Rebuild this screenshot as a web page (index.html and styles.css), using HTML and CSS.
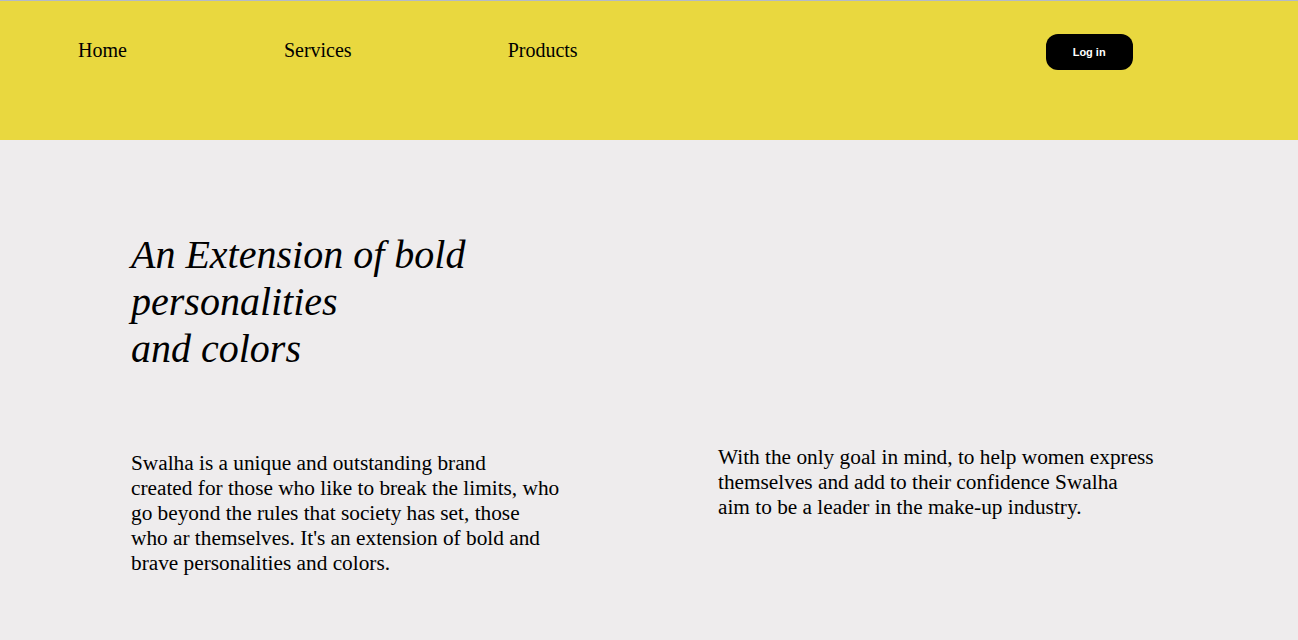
FILE: index.html
```html
<!DOCTYPE html>
<html lang="en">
<head>
<meta charset="utf-8">
<title>Swalha</title>
<link rel="stylesheet" href="styles.css">
</head>
<body>
<header class="topbar">
  <nav class="nav">
    <a class="nav-link" href="#">Home</a>
    <a class="nav-link" href="#">Services</a>
    <a class="nav-link nav-last" href="#">Products</a>
  </nav>
  <button class="login">Log in</button>
</header>
<main class="hero">
  <h1 class="title">An Extension of bold<br>personalities<br>and colors</h1>
  <div class="columns">
    <p class="text text-left">Swalha is a unique and outstanding brand<br>created for those who like to break the limits, who<br>go beyond the rules that society has set, those<br>who ar themselves. It's an extension of bold and<br>brave personalities and colors.</p>
    <p class="text text-right">With the only goal in mind, to help women express<br>themselves and add to their confidence Swalha<br>aim to be a leader in the make-up industry.</p>
  </div>
</main>
</body>
</html>
```
FILE: styles.css
```css
html, body {
  margin: 0;
  padding: 0;
}
body {
  background: #eeeced;
  font-family: "Liberation Serif", "Times New Roman", serif;
  color: #000;
  min-height: 640px;
}
.topbar {
  background: #e9d83f;
  border-top: 1px solid #b3bac8;
  height: 140px;
  display: flex;
  align-items: flex-start;
  padding-left: 78px;
  box-sizing: border-box;
}
.nav {
  display: flex;
  gap: 157px;
  margin-top: 38px;
}
.nav-link {
  font-size: 20px;
  color: #000;
  text-decoration: none;
  line-height: 23px;
}
.nav-last {
  margin-left: -1px;
}
.login {
  margin-left: 468px;
  margin-top: 33px;
  width: 87px;
  height: 36px;
  border: none;
  border-radius: 12px;
  background: #000;
  color: #fff;
  font-family: "Liberation Sans", Arial, sans-serif;
  font-weight: bold;
  font-size: 11px;
  cursor: pointer;
}
.hero {
  padding: 0 0 0 131px;
}
.title {
  margin: 0;
  padding-top: 91px;
  font-size: 40px;
  font-style: italic;
  font-weight: normal;
  line-height: 47px;
}
.columns {
  display: flex;
  align-items: flex-start;
  margin-top: 73px;
}
.text {
  margin: 0;
  font-size: 21.3px;
  line-height: 25px;
  white-space: nowrap;
}
.text-left {
  width: 440px;
  margin-top: 6px;
}
.text-right {
  width: 445px;
  margin-left: 147px;
}
```
